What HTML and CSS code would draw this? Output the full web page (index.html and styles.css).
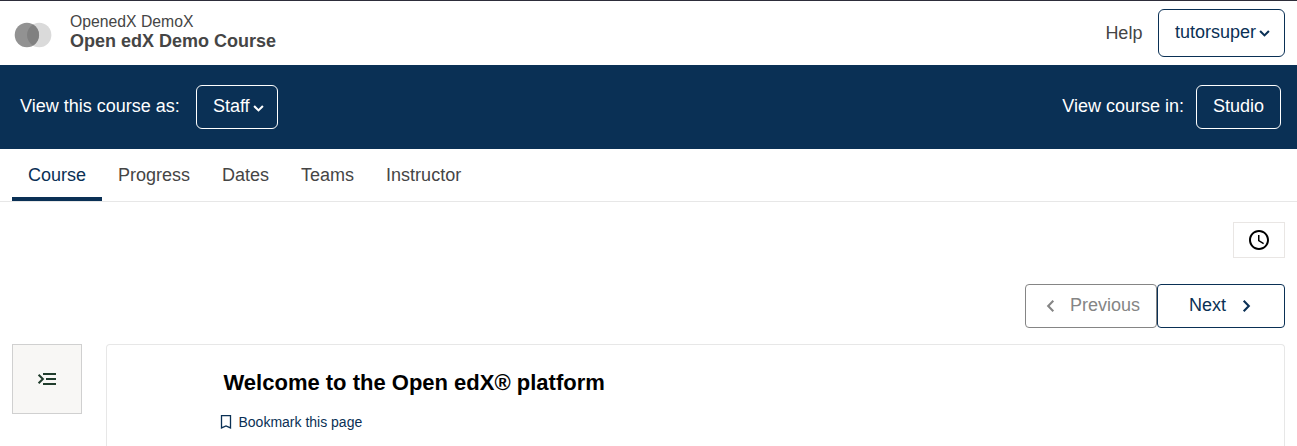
FILE: index.html
```html
<!DOCTYPE html>
<html lang="en">
<head>
<meta charset="utf-8">
<title>Open edX Demo Course</title>
<link rel="stylesheet" href="styles.css">
</head>
<body>
<header class="header">
  <svg class="logo" width="38" height="26" viewBox="0 0 38 26"><circle cx="25.2" cy="13" r="12.2" fill="#dadada"/><circle cx="12.9" cy="13" r="12.2" fill="#929292"/><path d="M19 2.5a12.2 12.2 0 0 1 0 21a12.2 12.2 0 0 1 0-21z" fill="#808080"/></svg>
  <div class="course-title">
    <span class="org">OpenedX DemoX</span>
    <span class="name">Open edX Demo Course</span>
  </div>
  <a class="help">Help</a>
  <button class="btn user">tutorsuper<svg class="caret" width="11" height="7" viewBox="0 0 11 7"><path d="M1.1 1.1l4.4 4.3 4.4-4.3" fill="none" stroke="currentColor" stroke-width="2.1"/></svg></button>
</header>
<section class="toolbar">
  <span>View this course as:</span>
  <button class="btn inverse staff">Staff<svg class="caret" width="11" height="7" viewBox="0 0 11 7"><path d="M1.1 1.1l4.4 4.3 4.4-4.3" fill="none" stroke="currentColor" stroke-width="2.1"/></svg></button>
  <span class="view-in">View course in:</span>
  <button class="btn inverse studio">Studio</button>
</section>
<nav class="tabs">
  <a class="tab active">Course</a><a class="tab">Progress</a><a class="tab">Dates</a><a class="tab">Teams</a><a class="tab">Instructor</a>
</nav>
<main class="content">
  <button class="clock"><svg width="24" height="24" viewBox="0 0 24 24"><path d="M11.99 2C6.47 2 2 6.48 2 12s4.47 10 9.99 10C17.52 22 22 17.52 22 12S17.52 2 11.99 2zM12 20c-4.42 0-8-3.58-8-8s3.58-8 8-8 8 3.58 8 8-3.58 8-8 8zm.5-13H11v6l5.25 3.15.75-1.23-4.5-2.67z"/></svg></button>
  <div class="pager">
    <button class="btn previous"><svg width="9" height="14" viewBox="0 0 9 14"><path d="M7.3 1.8L2.2 7l5.1 5.2" fill="none" stroke="currentColor" stroke-width="2.1"/></svg>Previous</button>
    <button class="btn next">Next<svg width="9" height="14" viewBox="0 0 9 14"><path d="M1.7 1.8L6.8 7l-5.1 5.2" fill="none" stroke="currentColor" stroke-width="2.1"/></svg></button>
  </div>
  <div class="unit-row">
    <button class="outline"><svg width="20" height="14" viewBox="0 0 20 14"><path d="M6 2h13M9 7h10M6 12h13M1.6 2.7L5.9 7l-4.3 4.3" fill="none" stroke="currentColor" stroke-width="2"/></svg></button>
    <article class="unit">
      <h1 class="unit-title">Welcome to the Open edX® platform</h1>
      <a class="bookmark"><svg width="12" height="14" viewBox="0 0 12 14"><path d="M1.5.7h9v12.2L6 10.9l-4.5 2z" fill="none" stroke="currentColor" stroke-width="1.3"/></svg>Bookmark this page</a>
    </article>
  </div>
</main>
</body>
</html>
```

FILE: styles.css
```css
* { box-sizing: border-box; }
body {
  margin: 0;
  height: 446px;
  overflow: hidden;
  background: #fff;
  color: #454545;
  font: 18px/28px "Liberation Sans", Arial, sans-serif;
}
.header {
  display: flex;
  align-items: center;
  height: 65px;
  padding: 1px 12px 0 14px;
  border-top: 1px solid #2d2d3a;
}
.logo { display: block; margin-top: 2px; }
.course-title {
  display: flex;
  flex-direction: column;
  margin: 0 auto 4px 18px;
}
.org { font-size: 15.75px; line-height: 18px; }
.name { font-weight: 700; line-height: 20px; }
.help { margin: 0 15.6px 2px 0; }
.btn {
  display: flex;
  align-items: center;
  justify-content: center;
  height: 44px;
  padding: 0 0 2px;
  border: 1px solid #0a3055;
  border-radius: 6px;
  background: transparent;
  color: #0a3055;
  font: inherit;
}
.user { width: 127px; height: 48px; margin-bottom: 2px; }
.user { padding-left: 2px; }
.staff { padding-left: 3px; }
.caret { margin: 4px 0 0 3px; }
.toolbar {
  display: flex;
  align-items: center;
  height: 84px;
  padding: 0 16px 0 20px;
  background: #0a3055;
  color: #fff;
}
.toolbar > span { padding-bottom: 2px; }
.inverse { border-color: #fff; color: #fff; }
.staff { width: 82px; margin-left: 16px; }
.view-in { margin-left: auto; }
.studio { width: 85px; margin-left: 12px; }
.tabs {
  display: flex;
  height: 53px;
  padding-left: 12px;
  border-bottom: 1px solid #e7e7e7;
}
.tab { padding: 12px 16px 8px; border-bottom: 4px solid transparent; }
.active { color: #0a3055; border-color: #0a3055; }
.content {
  display: flex;
  flex-direction: column;
  align-items: flex-end;
  padding: 20px 12px 0;
}
.clock {
  display: grid;
  place-items: center;
  width: 52px;
  height: 36px;
  padding: 0;
  border: 1px solid #e9e6e4;
  background: #fff;
}
.pager { display: flex; margin-top: 26px; }
.pager .btn { border-radius: 4px; }
.pager svg { margin-top: 2px; }
.previous { width: 132px; gap: 15px; padding-left: 4px; border-color: #858585; color: #858585; }
.next { width: 128px; gap: 16px; padding-right: 2px; }
.unit-row {
  display: flex;
  align-items: flex-start;
  align-self: stretch;
  gap: 24px;
  margin-top: 16px;
}
.outline {
  display: grid;
  place-items: center;
  width: 70px;
  height: 70px;
  padding: 0;
  border: 1px solid #d0d0d0;
  background: #f8f7f5;
  color: #203c2c;
}
.unit {
  flex: 1;
  height: 102px;
  padding: 24px 0 0 116px;
  border: 1px solid #e7e7e7;
  border-bottom: 0;
  border-radius: 4px 4px 0 0;
}
.unit-title {
  margin: 0 0 13px;
  padding-left: .5px;
  color: #000;
  font-size: 22px;
  line-height: 28px;
}
.bookmark {
  display: flex;
  align-items: center;
  gap: 6.5px;
  margin-left: -3px;
  color: #0a3055;
  font-size: 14px;
  line-height: 24px;
}
```
